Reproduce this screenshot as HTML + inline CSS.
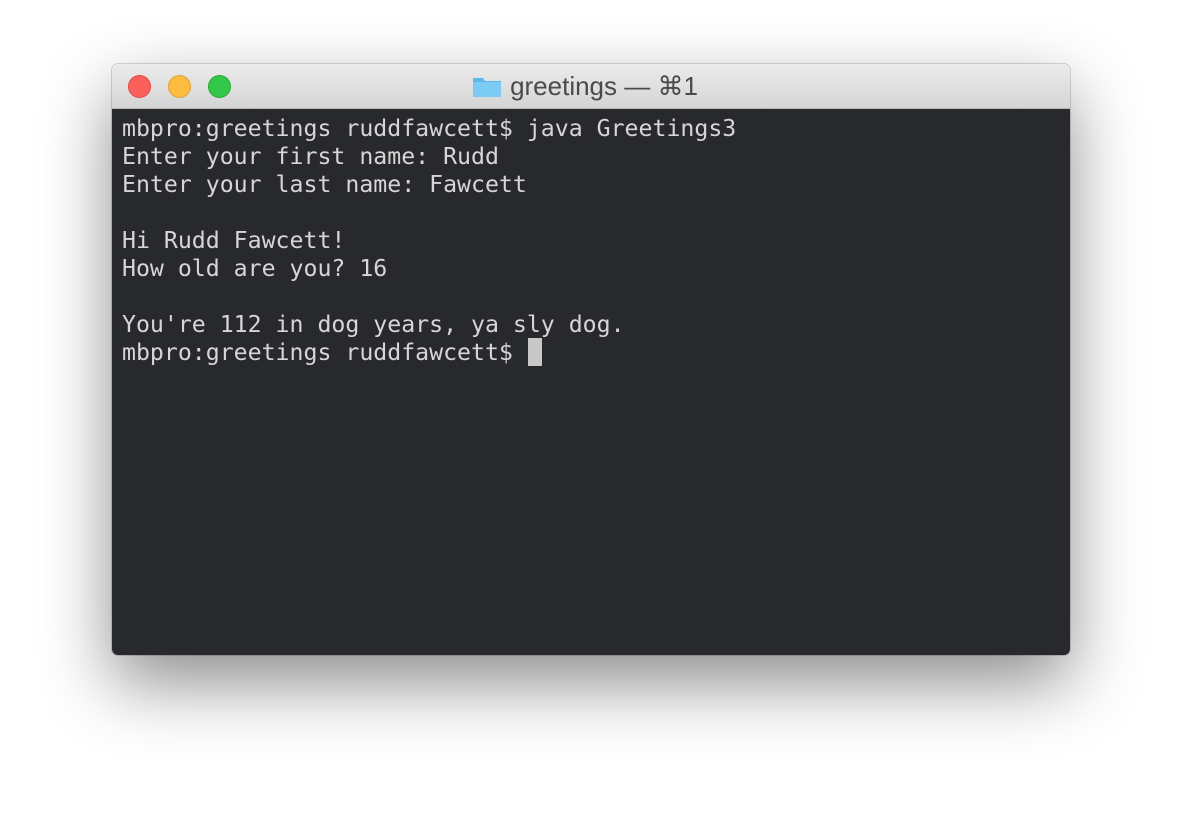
<!DOCTYPE html>
<html><head><meta charset="utf-8"><style>
html,body{margin:0;padding:0;width:1182px;height:816px;background:#fff;overflow:hidden}
.win{position:absolute;left:112px;top:64px;width:958px;height:591px;border-radius:6px;overflow:hidden;box-shadow:0 28px 70px rgba(0,0,0,.45),0 0 0 1px rgba(0,0,0,.15)}
.tb{height:44px;background:linear-gradient(#ebebeb,#d5d5d5);border-bottom:1px solid #b5b5b5;position:relative}
.dot{position:absolute;top:11px;width:23px;height:23px;border-radius:50%}
.title{position:absolute;left:0;right:12px;top:7px;text-align:center;font:26px "Liberation Sans",sans-serif;color:#4a4a4a}
.term{background:#28292d;height:546px;position:relative}
pre{margin:0;position:absolute;left:10px;top:6px;font:23.2px/28px "DejaVu Sans Mono",monospace;color:#d6d6d6}
.cur{position:absolute;left:416px;top:229px;width:14px;height:28px;background:#c8c8c6}
</style></head><body>
<div class="win">
<div class="tb">
<div class="dot" style="left:16px;background:#fc605b;border:1px solid #de4a45;box-sizing:border-box"></div>
<div class="dot" style="left:56px;background:#fdbc40;border:1px solid #dea236;box-sizing:border-box"></div>
<div class="dot" style="left:96px;background:#34c84a;border:1px solid #27aa35;box-sizing:border-box"></div>
<div class="title"><svg width="30" height="24" viewBox="0 0 30 24" style="vertical-align:-3px;margin-right:8px"><path d="M1 4h10l2 3h16v16H1z" fill="#5ab8ec"/><rect x="1" y="8" width="28" height="15" fill="#7ccbf5"/></svg>greetings — ⌘1</div>
</div>
<div class="term">
<pre>mbpro:greetings ruddfawcett$ java Greetings3
Enter your first name: Rudd
Enter your last name: Fawcett

Hi Rudd Fawcett!
How old are you? 16

You're 112 in dog years, ya sly dog.
mbpro:greetings ruddfawcett$ </pre>
<div class="cur"></div>
</div>
</div>
</body></html>
